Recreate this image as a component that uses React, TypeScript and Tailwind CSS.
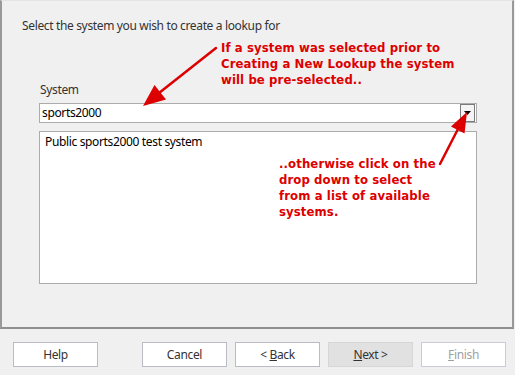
export default function App() {
  const ui = "font-['Noto_Sans','Open_Sans',sans-serif] tracking-[-0.35px]";
  const note =
    "font-['DejaVu_Sans_Condensed','DejaVu_Sans',Verdana,sans-serif] font-bold text-[13px] leading-[16px] tracking-[0.1px] text-[#dd0000]";

  return (
    <div className={`relative w-[515px] h-[375px] bg-[#f0f0f0] text-[12px] text-[#1e1e1e] ${ui}`}>
      {/* wizard page */}
      <div className="h-[329px] w-[514px] border-t border-t-[#e4e4e4] border-l-2 border-r-2 border-b-2 border-l-[#999999] border-r-[#999999] border-b-[#8f8f8f] pl-[20px] pt-[17px]">
        <p className="leading-[16px] text-[#333333]">Select the system you wish to create a lookup for</p>

        <div className="ml-[17px] mt-[48px] w-[438px]">
          <div className="pl-[1px] leading-[16px] text-[#333333]">System</div>

          {/* combo box */}
          <div className="mt-[5px] h-[20px] flex items-center border border-[#acacac] bg-white">
            <span className="flex-1 pl-[2px] leading-[16px] text-black">sports2000</span>
            <div className="mr-[1px] h-[18px] w-[15px] flex items-center justify-center border border-[#7a7a7a] bg-[#f4f4f4]">
              <svg width="7" height="4" viewBox="0 0 7 4">
                <polygon points="0,0 7,0 3.5,4" fill="#000" />
              </svg>
            </div>
          </div>

          {/* description */}
          <div className="mt-[8px] h-[153px] border border-[#acacac] bg-white px-[5px] pt-[1px]">
            <span className="leading-[16px] text-black">Public sports2000 test system</span>
          </div>
        </div>
      </div>

      {/* buttons */}
      <div className="flex pl-[13px] pt-[13px]">
        <button className="h-[25px] w-[85px] border border-[#b9bcc4] bg-white text-[#333333]">Help</button>
        <button className="ml-[44px] h-[25px] w-[85px] border border-[#b9bcc4] bg-white text-[#333333]">Cancel</button>
        <button className="ml-[8px] h-[25px] w-[85px] border border-[#b9bcc4] bg-white text-[#333333]">
          &lt; <span className="underline">B</span>ack
        </button>
        <button className="ml-[8px] h-[25px] w-[85px] border border-[#d6d6d6] bg-[#e1e1e1] text-[#333333]">
          <span className="underline">N</span>ext &gt;
        </button>
        <button className="ml-[8px] h-[25px] w-[85px] border border-[#c9ccd2] bg-white text-[#a0a0a0]">
          <span className="underline">F</span>inish
        </button>
      </div>

      {/* annotations */}
      <div className={`absolute left-[221px] top-[40px] ${note}`}>
        <div>If a system was selected prior to</div>
        <div>Creating a New Lookup the system</div>
        <div>will be pre-selected..</div>
      </div>
      <div className={`absolute left-[279px] top-[156px] ${note}`}>
        <div>..otherwise click on the</div>
        <div>drop down to select</div>
        <div>from a list of available</div>
        <div>systems.</div>
      </div>

      <svg className="absolute left-0 top-0 pointer-events-none" width="515" height="375" viewBox="0 0 515 375">
        <line x1="216" y1="48" x2="159" y2="93" stroke="#dd0000" strokeWidth="2.5" strokeLinecap="round" />
        <polygon points="143,106 166,99.5 154.5,85" fill="#dd0000" />
        <line x1="440" y1="164" x2="458" y2="129" stroke="#dd0000" strokeWidth="2.5" strokeLinecap="round" />
        <polygon points="467,112 464.5,133.5 451,126.5" fill="#dd0000" />
      </svg>
    </div>
  );
}
